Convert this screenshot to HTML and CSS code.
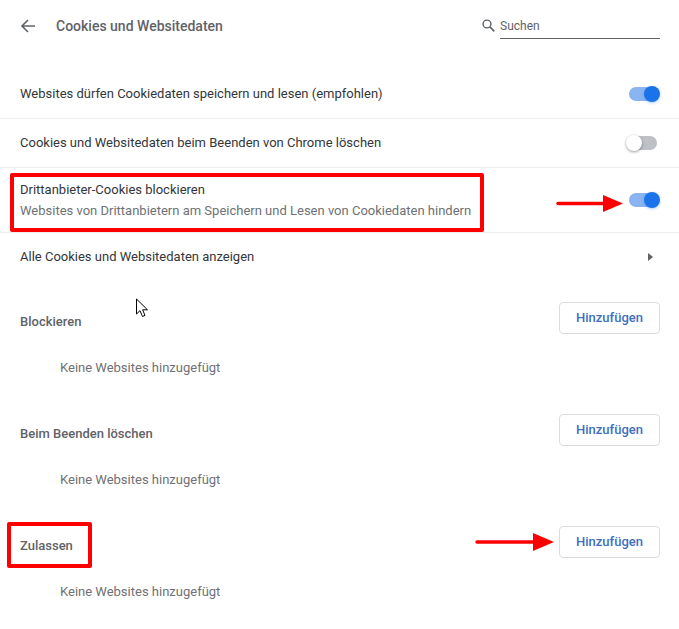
FILE: index.html
```html
<!DOCTYPE html>
<html lang="de">
<head>
    <meta charset="UTF-8">
    <meta name="viewport" content="width=device-width, initial-scale=1.0">
    <title>Cookies und Websitedaten</title>
    <link rel="stylesheet" href="styles.css">
</head>
<body>
    <div class="page">
        <!-- Header -->
        <div class="header">
            <svg class="back-icon" width="16" height="16" viewBox="0 0 16 16"><path d="M15 8H2M8 2 2 8l6 6" fill="none" stroke="#5f6368" stroke-width="1.6"/></svg>
            <h1 class="title">Cookies und Websitedaten</h1>
            <svg class="search-icon" width="13" height="13" viewBox="0 0 13 13"><circle cx="5" cy="5" r="3.9" fill="none" stroke="#5f6368" stroke-width="1.4"/><path d="M8 8 12.3 12.3" stroke="#5f6368" stroke-width="1.7"/></svg>
            <div class="search-box">Suchen</div>
        </div>

        <!-- Settings -->
        <div class="row">
            <span class="row-label">Websites dürfen Cookiedaten speichern und lesen (empfohlen)</span>
            <span class="toggle on"></span>
        </div>
        <div class="row row-short">
            <span class="row-label">Cookies und Websitedaten beim Beenden von Chrome löschen</span>
            <span class="toggle off"></span>
        </div>
        <div class="row row-tall">
            <div>
                <div class="row-label">Drittanbieter-Cookies blockieren</div>
                <div class="row-sub">Websites von Drittanbietern am Speichern und Lesen von Cookiedaten hindern</div>
            </div>
            <span class="toggle on"></span>
        </div>
        <div class="row row-short row-last">
            <span class="row-label">Alle Cookies und Websitedaten anzeigen</span>
            <span class="caret"></span>
        </div>

        <!-- Site lists -->
        <div class="section">
            <div class="section-head">
                <h2 class="section-title">Blockieren</h2>
                <button class="add-btn">Hinzufügen</button>
            </div>
            <div class="empty">Keine Websites hinzugefügt</div>
        </div>
        <div class="section">
            <div class="section-head">
                <h2 class="section-title">Beim Beenden löschen</h2>
                <button class="add-btn">Hinzufügen</button>
            </div>
            <div class="empty">Keine Websites hinzugefügt</div>
        </div>
        <div class="section">
            <div class="section-head">
                <h2 class="section-title">Zulassen</h2>
                <button class="add-btn">Hinzufügen</button>
            </div>
            <div class="empty">Keine Websites hinzugefügt</div>
        </div>

        <!-- Annotations drawn over the screenshot -->
        <div class="mark mark-row"></div>
        <div class="mark mark-section"></div>
        <svg class="arrow arrow-toggle" width="68" height="18" viewBox="0 0 68 18"><path d="M2 8.5H48" stroke="#f00" stroke-width="3.5" stroke-linecap="round"/><path d="M47 0 67 8.5 47 17Z" fill="#f00"/></svg>
        <svg class="arrow arrow-btn" width="80" height="18" viewBox="0 0 80 18"><path d="M2 9H60" stroke="#f00" stroke-width="3.5" stroke-linecap="round"/><path d="M58 0 79 9 58 18Z" fill="#f00"/></svg>
        <svg class="pointer" width="14" height="20" viewBox="0 0 14 20"><path d="M1.5 1V16L5 12.7 7.5 18.5 10 17.4 7.6 11.8H12.5Z" fill="#fff" stroke="#000" stroke-width="1"/></svg>
    </div>
</body>
</html>
```

FILE: styles.css
```css
* {
    margin: 0;
    padding: 0;
    box-sizing: border-box;
}

body {
    font-family: Roboto, "Liberation Sans", sans-serif;
    font-size: 13px;
    background: #ffffff;
    color: #333639;
}

.page {
    position: relative;
    width: 679px;
    height: 629px;
    overflow: hidden;
}

/* Header */
.header {
    display: flex;
    align-items: center;
    height: 52px;
    padding: 0 19px 0 20px;
    margin-bottom: 17px;
}

.title {
    font-size: 14px;
    font-weight: 500;
    color: #5f6368;
    margin-left: 20px;
    flex: 1;
}

.search-icon {
    margin-right: 5px;
    margin-top: -1px;
}

.search-box {
    width: 160px;
    height: 25px;
    line-height: 25px;
    font-size: 12px;
    color: #5f6368;
    border-bottom: 1px solid #5f6368;
}

/* Rows */
.row {
    display: flex;
    align-items: center;
    justify-content: space-between;
    height: 50px;
    padding: 0 19px 0 20px;
    border-bottom: 1px solid #eeeeee;
}

.row-short {
    height: 49px;
    padding-bottom: 1px;
}

.row-tall {
    height: 65px;
}

.row-last {
    padding-bottom: 2px;
    border-bottom: none;
}

.row-sub {
    color: #6e7175;
    margin-top: 6px;
}

/* Toggles */
.toggle {
    position: relative;
    display: block;
    width: 28px;
    height: 14px;
    border-radius: 7px;
    margin-right: 3px;
}

.toggle:before {
    content: "";
    position: absolute;
    top: -1px;
    width: 16px;
    height: 16px;
    border-radius: 50%;
}

.toggle.on {
    background: #8ab4f0;
}

.toggle.on:before {
    right: -3px;
    background: #1a73e8;
    box-shadow: 0 1px 3px rgba(26, 115, 232, 0.35);
}

.toggle.off {
    background: #bdc1c6;
}

.toggle.off:before {
    left: -3px;
    background: #ffffff;
    box-shadow: 0 1px 3px rgba(0, 0, 0, 0.4);
}

.caret {
    width: 0;
    height: 0;
    margin-right: 7px;
    border-left: 5px solid #5f6368;
    border-top: 4px solid transparent;
    border-bottom: 4px solid transparent;
}

/* Site list sections */
.section {
    height: 112px;
    padding: 20px 19px 0 20px;
}

.section-head {
    display: flex;
    align-items: center;
    justify-content: space-between;
}

.section-title {
    font-size: 13px;
    font-weight: 500;
    color: #5f6368;
    padding-top: 6px;
}

.add-btn {
    width: 101px;
    height: 32px;
    padding-bottom: 2px;
    background: #ffffff;
    border: 1px solid #dadce0;
    border-radius: 4px;
    font-family: inherit;
    font-size: 13px;
    font-weight: 500;
    color: #3f6fc0;
}

.empty {
    margin-top: 26px;
    padding-left: 40px;
    color: #6e7175;
}

/* Red annotations */
.mark {
    position: absolute;
    border: 4px solid #ff0000;
    border-radius: 2px;
}

.mark-row {
    left: 10px;
    top: 173px;
    width: 474px;
    height: 59px;
}

.mark-section {
    left: 7px;
    top: 522px;
    width: 85px;
    height: 46px;
}

.arrow {
    position: absolute;
}

.arrow-toggle {
    left: 556px;
    top: 195px;
}

.arrow-btn {
    left: 475px;
    top: 533px;
}

.pointer {
    position: absolute;
    left: 135px;
    top: 298px;
}
```
